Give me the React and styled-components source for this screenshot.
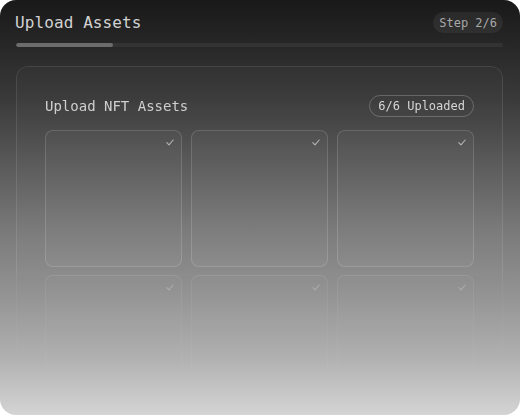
import React from 'react'
import styled, { createGlobalStyle } from 'styled-components';

const GlobalStyle = createGlobalStyle`
    html, body {
        margin: 0;
        padding: 0;
        background: #ffffff;
    }
    * {
        box-sizing: border-box;
    }
`;

const tiles = [1, 2, 3, 4, 5, 6];

const App = () => {
    return (
        <>
            <GlobalStyle />
            <Card>
                <Header>
                    <Title>Upload Assets</Title>
                    <StepPill>Step 2/6</StepPill>
                </Header>
                <Track>
                    <Fill style={{ width: '20%' }} />
                </Track>
                <Panel>
                    <PanelHeader>
                        <PanelTitle>Upload NFT Assets</PanelTitle>
                        <CountPill>6/6 Uploaded</CountPill>
                    </PanelHeader>
                    <Grid>
                        {tiles.map((t) => (
                            <Tile key={t}>
                                <Check width="8" height="7" viewBox="0 0 8 7">
                                    <polyline points="0.8,3.6 3,5.8 7.2,1" fill="none" stroke="currentColor" strokeWidth="1.1" strokeLinecap="round" strokeLinejoin="round" />
                                </Check>
                            </Tile>
                        ))}
                    </Grid>
                </Panel>
            </Card>
        </>
    )
}

const Card = styled.div`
    width: 520px;
    height: 415px;
    border-radius: 16px;
    overflow: hidden;
    padding: 12px 17px 0 16px;
    font-family: "DejaVu Sans Mono", "Liberation Mono", monospace;
    background: linear-gradient(180deg, #191919 0%, #262626 10%, #3a3a3a 24%, #5a5a5a 40%, #7a7a7a 56%, #959595 72%, #b0b0b0 86%, #d4d4d4 100%);
`;

const Header = styled.div`
    display: flex;
    align-items: center;
    justify-content: space-between;
    height: 21px;
`;

const Title = styled.h1`
    margin: 0 0 0 -1px;
    font-size: 16px;
    font-weight: 500;
    color: #d2d2d2;
    letter-spacing: 0.1px;
`;

const StepPill = styled.div`
    height: 21px;
    padding: 0 6px;
    display: flex;
    align-items: center;
    border-radius: 11px;
    background: rgba(255, 255, 255, 0.06);
    color: #a8a8a8;
    font-size: 12px;
`;

const Track = styled.div`
    margin-top: 10px;
    height: 4px;
    border-radius: 2px;
    background: rgba(255, 255, 255, 0.06);
    overflow: hidden;
`;

const Fill = styled.div`
    height: 100%;
    border-radius: 2px;
    background: #6c6c6c;
`;

const Panel = styled.div`
    margin-top: 19px;
    border: 1px solid rgba(255, 255, 255, 0.1);
    border-radius: 12px;
    padding: 28px 28px;
    background: rgba(255, 255, 255, 0.015);
    mask-image: linear-gradient(180deg, #000 0px, #000 200px, rgba(0, 0, 0, 0.45) 215px, rgba(0, 0, 0, 0.2) 280px, rgba(0, 0, 0, 0.08) 340px);
    -webkit-mask-image: linear-gradient(180deg, #000 0px, #000 200px, rgba(0, 0, 0, 0.45) 215px, rgba(0, 0, 0, 0.2) 280px, rgba(0, 0, 0, 0.08) 340px);
`;

const PanelHeader = styled.div`
    display: flex;
    align-items: center;
    justify-content: space-between;
    height: 22px;
`;

const PanelTitle = styled.h2`
    margin: 0;
    font-size: 14px;
    font-weight: 500;
    color: #cfcfcf;
`;

const CountPill = styled.div`
    height: 22px;
    padding: 0 8px;
    display: flex;
    align-items: center;
    border-radius: 11px;
    border: 1px solid rgba(255, 255, 255, 0.22);
    color: #d6d6d6;
    font-size: 12px;
`;

const Grid = styled.div`
    margin-top: 13px;
    display: grid;
    grid-template-columns: repeat(3, 1fr);
    gap: 8px 9px;
`;

const Tile = styled.div`
    position: relative;
    aspect-ratio: 1;
    border-radius: 8px;
    border: 1px solid rgba(255, 255, 255, 0.14);
    background: rgba(255, 255, 255, 0.025);
    color: rgba(255, 255, 255, 0.55);
`;

const Check = styled.svg`
    position: absolute;
    top: 8px;
    right: 7px;
`;

export default App
